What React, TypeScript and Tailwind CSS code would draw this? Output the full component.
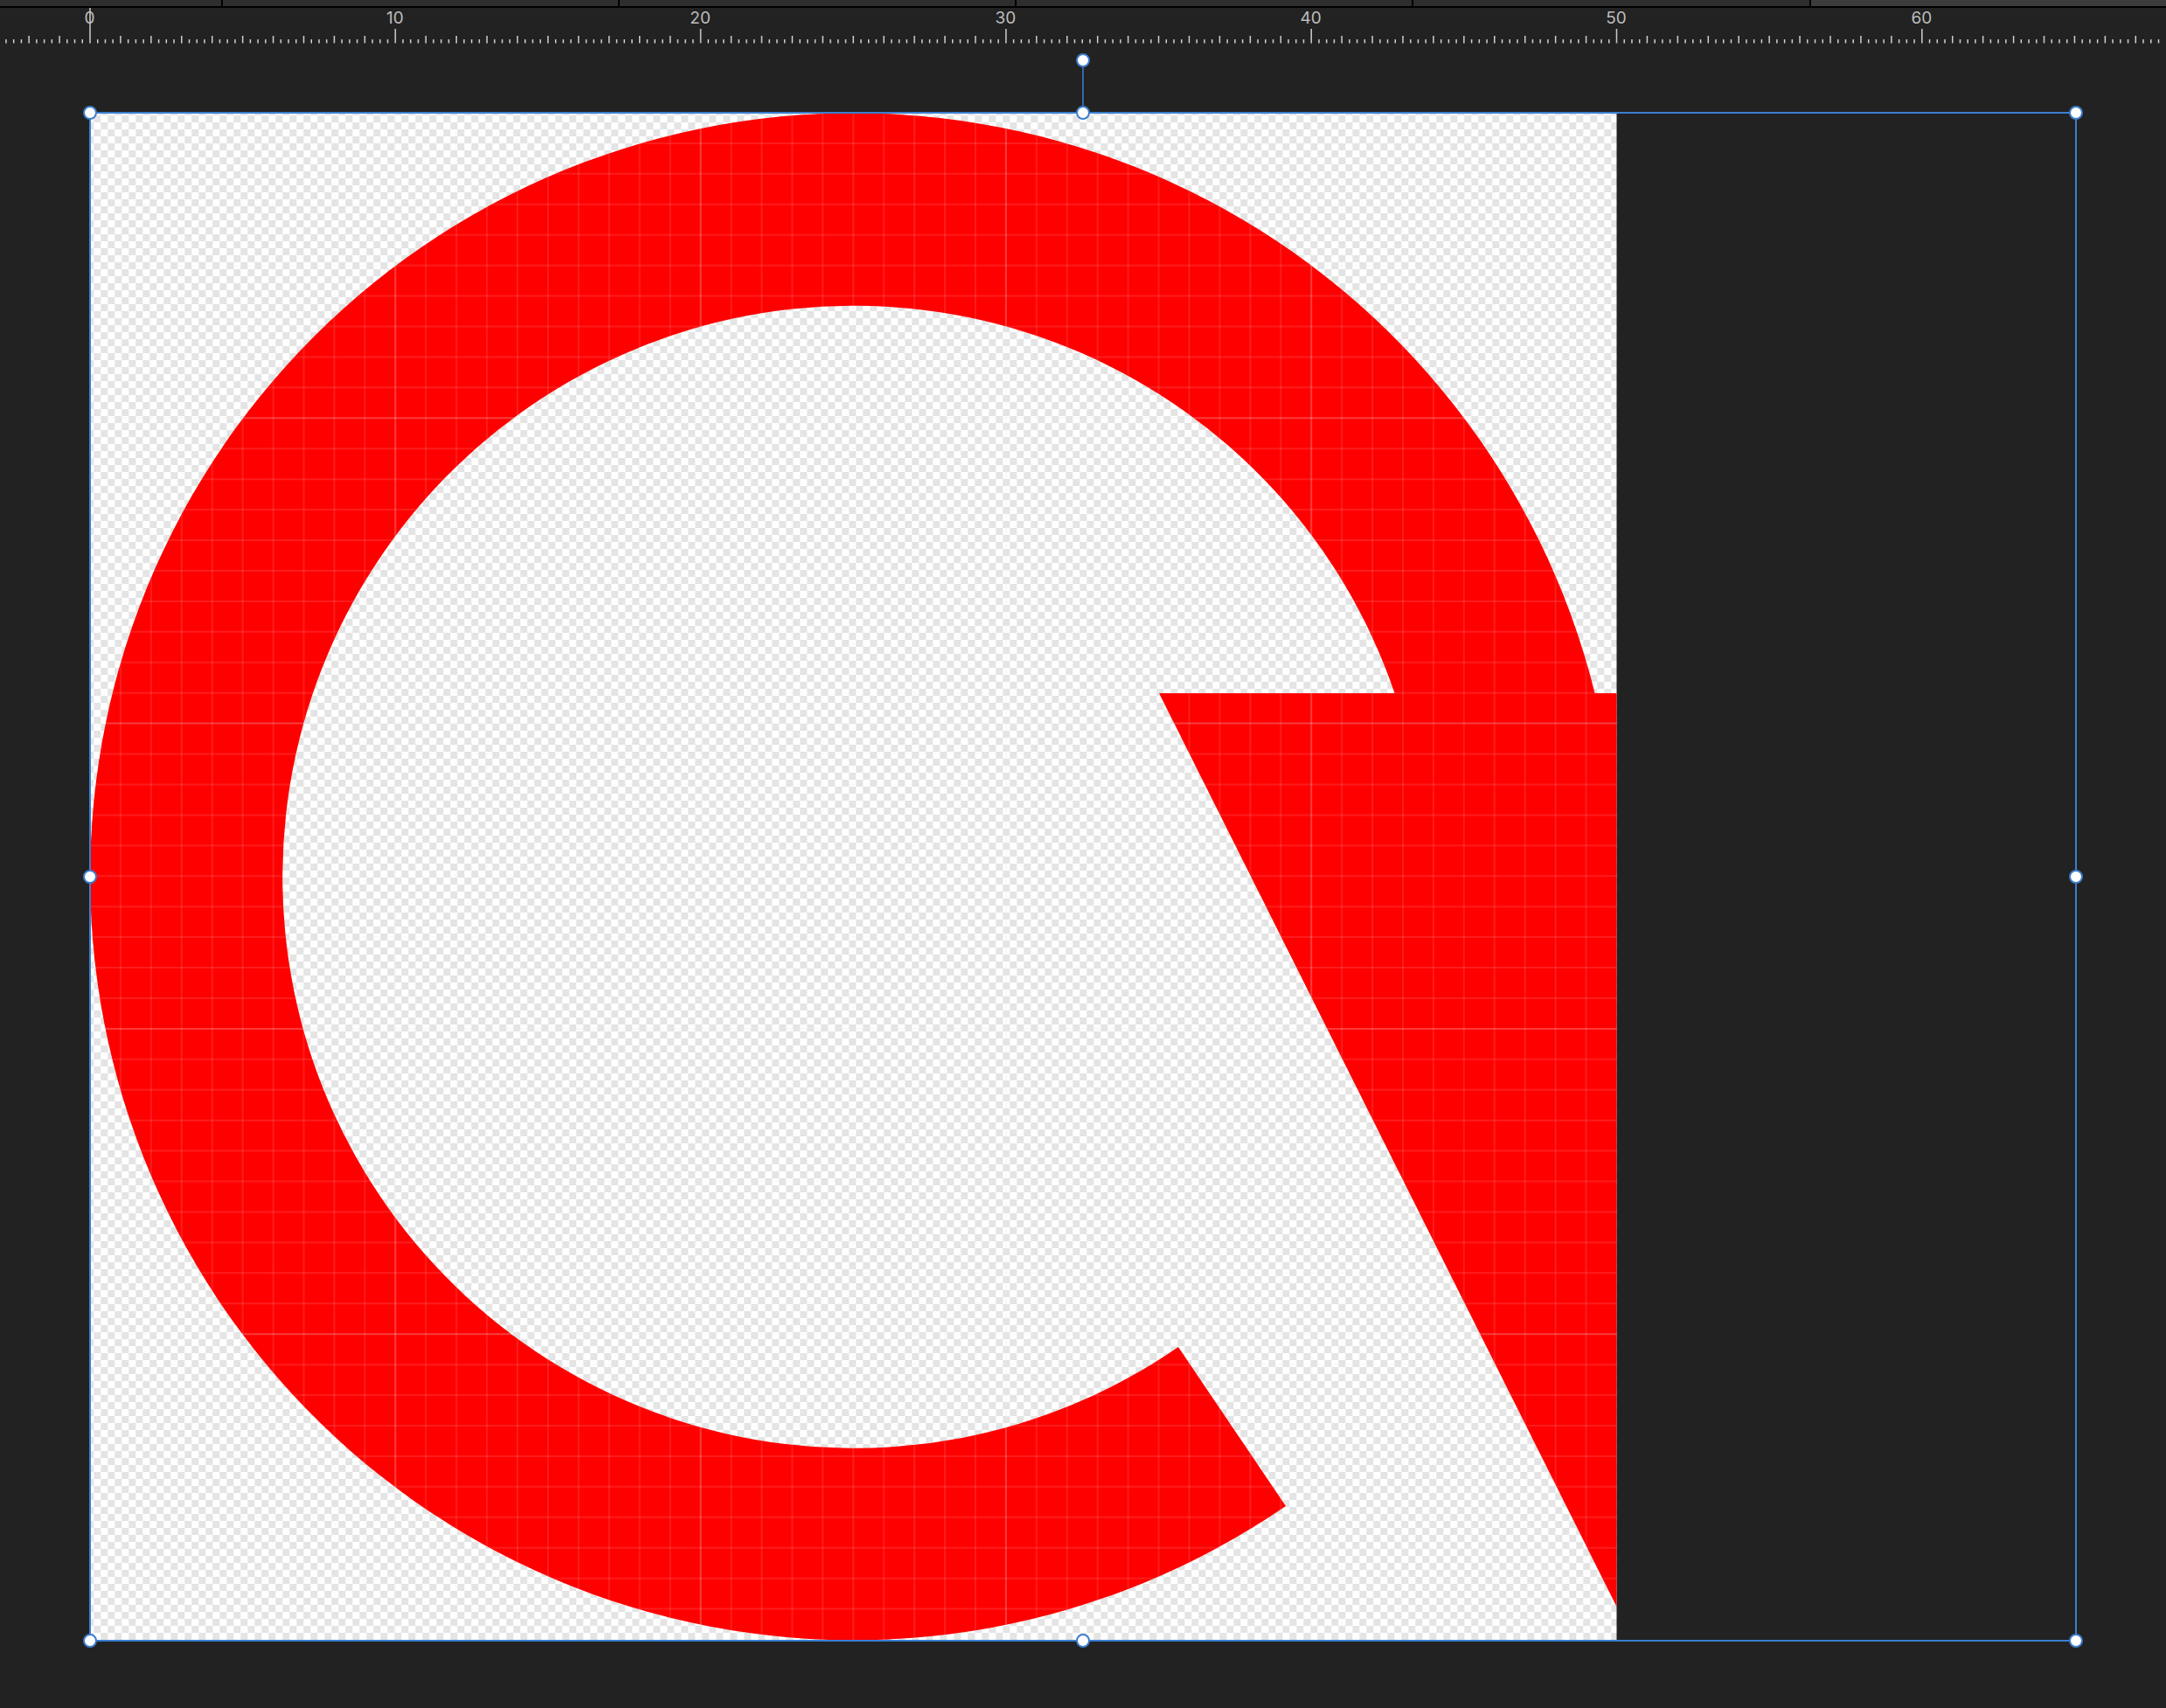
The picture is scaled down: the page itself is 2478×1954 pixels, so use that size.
const UNIT = 34.93;
const TICK = UNIT / 4;
const ORIGIN_X = 103;

const tabs = [
  'w-[255px] bg-[#2e2e2e] border-r-2 border-black',
  'w-[454px] bg-[#2e2e2e] border-r-2 border-black',
  'w-[454px] bg-[#2e2e2e] border-r-2 border-black',
  'w-[454px] bg-[#2e2e2e] border-r-2 border-black',
  'w-[455px] bg-[#2e2e2e] border-r-2 border-black',
  'flex-1 bg-[#3c3c3c]',
];

const rulerLabels = [0, 10, 20, 30, 40, 50, 60];

function Ruler() {
  const ticks: React.ReactNode[] = [];
  // ticks run a little to the left of zero, up to the window edge
  for (let i = -11; i * TICK < 2478 - ORIGIN_X; i++) {
    const x = ORIGIN_X + i * TICK;
    const major = i % 40 === 0;
    const medium = i % 4 === 0;
    const top = i === 0 ? 0 : major ? 24 : medium ? 32 : 36;
    ticks.push(
      <line key={i} x1={x} x2={x} y1={top} y2={40.4} stroke={major ? '#c4c4c4' : '#d0d0d0'} strokeWidth={major ? 1.6 : 1.5} />
    );
  }
  return (
    <svg width="2478" height="44" className="block">
      {rulerLabels.map((n) => (
        <text
          key={n}
          x={ORIGIN_X + n * UNIT - 0.5}
          y={18}
          textAnchor="middle"
          fontSize="19"
          fill="#bcbcbc"
          fontFamily="Inter, 'Liberation Sans', sans-serif"
        >
          {n}
        </text>
      ))}
      {ticks}
    </svg>
  );
}

function Artwork() {
  const size = 1747;
  const width = 50 * UNIT;
  const gridLines = Array.from({ length: 49 }, (_, i) => i + 1);

  return (
    <svg width={width} height={size} className="absolute left-0 top-0 block">
      <defs>
        <pattern id="checks" x="4.3" y="3" width="16" height="16" patternUnits="userSpaceOnUse">
          <rect width="16" height="16" fill="#ffffff" />
          <rect width="8" height="8" fill="#e4e4e4" />
          <rect x="8" y="8" width="8" height="8" fill="#e4e4e4" />
        </pattern>
      </defs>
      <rect width={width} height={size} fill="url(#checks)" />

      {/* the open ring */}
      <path
        d="M 1721.5 664 A 873.5 873.5 0 1 0 1368 1594 L 1245 1412 A 653.5 653.5 0 1 1 1492.5 664 Z"
        fill="#ff0000"
      />
      {/* the slanted wedge */}
      <path d={`M 1223 664 L ${width} 664 L ${width} 1709 Z`} fill="#ff0000" />

      {/* grid */}
      {gridLines.map((n) => (
        <g key={n} stroke="#e8e8e8" strokeOpacity={n % 10 === 0 ? 0.26 : 0.12} strokeWidth={2}>
          <line x1={n * UNIT} x2={n * UNIT} y1={0} y2={size} />
          <line x1={0} x2={width} y1={n * UNIT} y2={n * UNIT} />
        </g>
      ))}
    </svg>
  );
}

function Handle({ className }: { className: string }) {
  return (
    <div
      className={`absolute h-4 w-4 -translate-x-1/2 -translate-y-1/2 rounded-full border-2 border-[#3d7dcc] bg-white ${className}`}
    />
  );
}

export default function App() {
  return (
    <div className="h-[1954px] w-[2478px] overflow-hidden bg-[#222222]">
      <div className="flex h-[9px] border-b-2 border-black">
        {tabs.map((cls, i) => (
          <div key={i} className={cls} />
        ))}
      </div>
      <Ruler />

      <div className="pl-[103px] pt-[76px]">
        {/* selection box around the artboard */}
        <div className="relative h-[1748px] w-[2272px]">
          <Artwork />
          <div className="absolute inset-0 -m-px border-2 border-[#3a7ed0]" />

          {/* rotate stem with its handle on top */}
          <div className="absolute bottom-full left-1/2 h-[60px] w-0.5 -translate-x-1/2 bg-[#2f69ad]">
            <Handle className="left-1/2 top-0" />
          </div>

          <Handle className="left-0 top-0" />
          <Handle className="left-1/2 top-0" />
          <Handle className="left-full top-0" />
          <Handle className="left-0 top-1/2" />
          <Handle className="left-full top-1/2" />
          <Handle className="left-0 top-full" />
          <Handle className="left-1/2 top-full" />
          <Handle className="left-full top-full" />
        </div>
      </div>
    </div>
  );
}
